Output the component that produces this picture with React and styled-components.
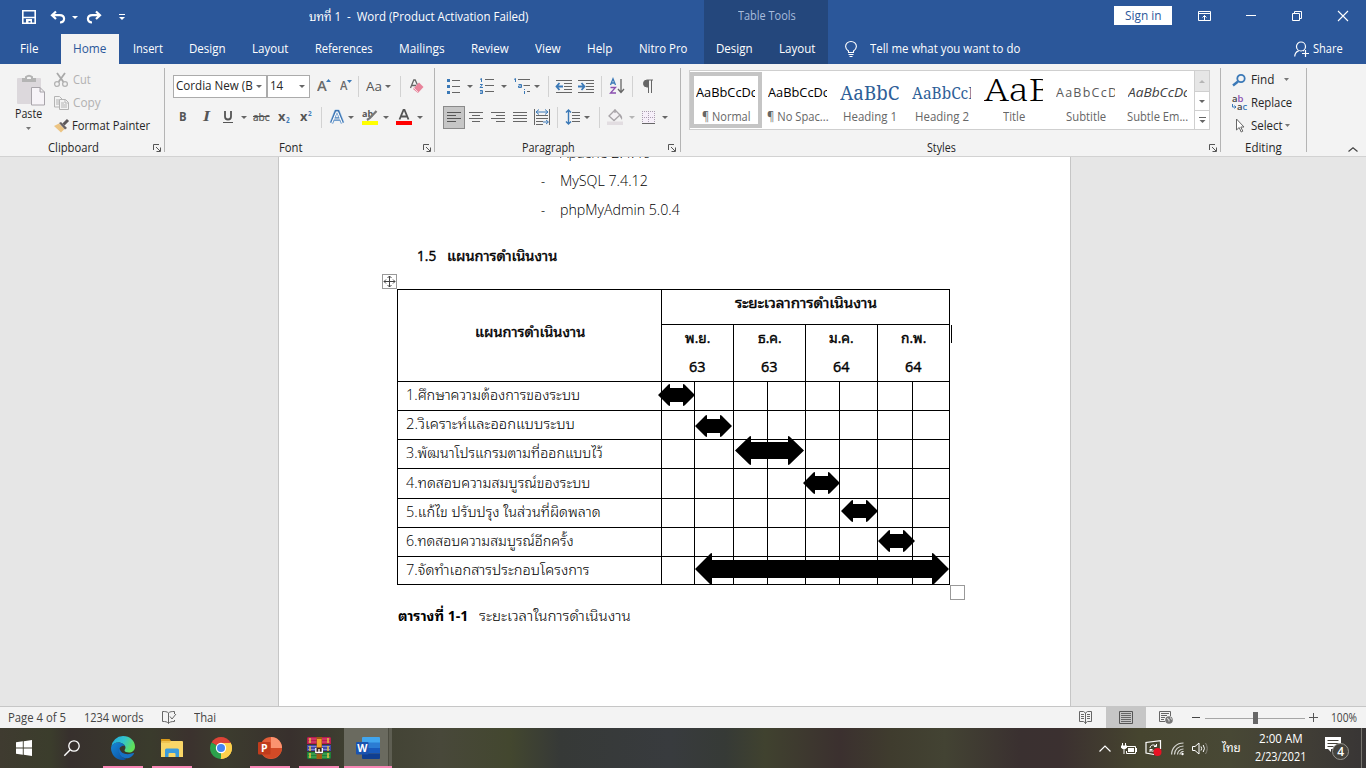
import React, { useLayoutEffect, useRef } from "react";
import styled, { createGlobalStyle, css } from "styled-components";

const THAI = `"Noto Looped Thai", "Noto Sans Thai Looped", "Loma", "Garuda", "Waree", "Kinnari", "Norasi", "TH Sarabun New", "Noto Sans Thai"`;
const UI = `"Open Sans", "Noto Sans", ${THAI}, sans-serif`;

const Global = createGlobalStyle`
  * { box-sizing: border-box; }
  body { margin: 0; overflow: hidden; background: #e6e6e6; font-family: ${UI}; font-size: 12px; color: #262626; }
  svg { display: block; flex: none; overflow: visible; }
`;

/* ---------- text of a known width ---------- */
const FitBox = styled.span`
  display: block;
  flex: none;
  width: ${(p) => p.$w}px;
  height: ${(p) => p.$lh || 18}px;
  line-height: ${(p) => p.$lh || 18}px;
  font-family: ${(p) => p.$font || UI};
  font-size: ${(p) => p.$size || 12}px;
  font-weight: ${(p) => p.$weight || 400};
  font-style: ${(p) => (p.$italic ? "italic" : "normal")};
  color: ${(p) => p.$color || "inherit"};
  -webkit-text-stroke: ${(p) => p.$stroke || 0}px currentColor;
  white-space: pre;
`;
const FitInner = styled.span`
  display: inline-block;
  transform-origin: 0 50%;
`;
function Fit({ w, children, ...rest }) {
  const ref = useRef(null);
  useLayoutEffect(() => {
    const el = ref.current;
    el.style.transform = "none";
    const natural = el.offsetWidth;
    if (natural) el.style.transform = `scaleX(${(w - 0.5) / natural})`;
  }, [w, children]);
  return (
    <FitBox $w={w} {...rest}>
      <FitInner ref={ref}>{children}</FitInner>
    </FitBox>
  );
}

const Svg = ({ w, h, children, ...r }) => (
  <svg width={w} height={h} viewBox={`0 0 ${w} ${h}`} fill="none" {...r}>
    {children}
  </svg>
);
const Caret = ({ c = "#666" }) => (
  <Svg w={6} h={3}>
    <path d="M0 0h6L3 3z" fill={c} />
  </Svg>
);

/* ---------- shell ---------- */
const Window = styled.div`
  width: 1366px;
  height: 768px;
  display: flex;
  flex-direction: column;
  overflow: hidden;
`;
const Header = styled.header`
  height: 64px;
  flex: none;
  display: flex;
  background: #2b579a;
  color: #fff;
`;
const HeaderPart = styled.div`
  width: ${(p) => p.$w}px;
  display: grid;
  grid-template-rows: 34px 30px;
  background: ${(p) => (p.$dark ? "#24477c" : "transparent")};
`;
const Bar = styled.div`
  display: flex;
  align-items: center;
  padding-left: ${(p) => p.$pl || 0}px;
  padding-bottom: ${(p) => p.$pb || 0}px;
`;
const Slot = styled.div`
  width: ${(p) => p.$w}px;
  flex: none;
  display: flex;
  align-items: center;
`;
const ActiveTab = styled.div`
  width: 58px;
  height: 30px;
  margin-right: 14px;
  padding-left: 12px;
  display: flex;
  align-items: center;
  background: #f3f3f3;
  color: #2b579a;
`;
const SignIn = styled.div`
  width: 58px;
  height: 19px;
  margin-right: 26px;
  padding-left: 11px;
  display: flex;
  align-items: center;
  background: #fff;
  color: #2b579a;
`;

const tabs = [
  ["Insert", 30, 56],
  ["Design", 37, 63],
  ["Layout", 37, 63],
  ["References", 58, 84],
  ["Mailings", 46, 72],
  ["Review", 38, 64],
  ["View", 26, 52],
  ["Help", 26, 52],
  ["Nitro Pro", 49, 60],
];

function TitleAndTabs() {
  return (
    <Header>
      <HeaderPart $w={704}>
        <Bar $pl={22}>
          <Slot $w={29}>
            <Svg w={14} h={14}>
              <path d="M.8.8h12.4v12.4H.8zM1 7.5h12" stroke="#fff" strokeWidth="1.6" />
              <path d="M4 9h6v5H8.500v-3H6.500v3H4z" fill="#fff" />
            </Svg>
          </Slot>
          <Slot $w={21}>
            <Svg w={15} h={13}>
              <path d="M5 .5L1 4.200l4 3.800M1.500 4.200h7.200c5.800 0 5.800 7.300.3 7.300" stroke="#fff" strokeWidth="2.200" />
            </Svg>
          </Slot>
          <Slot $w={14}><Caret c="#fff" /></Slot>
          <Slot $w={33}>
            <Svg w={15} h={13}>
              <path d="M10 .5l4 3.700-4 3.800M13.500 4.200H6.300c-5.800 0-5.800 7.300-.3 7.300" stroke="#fff" strokeWidth="2.200" />
            </Svg>
          </Slot>
          <Slot $w={190}>
            <Svg w={6} h={6}>
              <path d="M0 .5h6" stroke="#fff" />
              <path d="M0 3h6L3 6z" fill="#fff" />
            </Svg>
          </Slot>
          <Fit w={220} $lh={20}>{"บทที่ 1  -  Word (Product Activation Failed)"}</Fit>
        </Bar>
        <Bar $pl={20}>
          <Slot $w={41}><Fit w={19}>File</Fit></Slot>
          <ActiveTab><Fit w={34}>Home</Fit></ActiveTab>
          {tabs.map(([t, w, pitch]) => (
            <Slot key={t} $w={pitch}><Fit w={w}>{t}</Fit></Slot>
          ))}
        </Bar>
      </HeaderPart>
      <HeaderPart $w={124} $dark>
        <Bar $pl={34} $pb={2}><Fit w={58} $color="#a9bddd">Table Tools</Fit></Bar>
        <Bar $pl={12}>
          <Slot $w={63}><Fit w={37}>Design</Fit></Slot>
          <Slot $w={37}><Fit w={37}>Layout</Fit></Slot>
        </Bar>
      </HeaderPart>
      <HeaderPart $w={538}>
        <Bar $pl={286} $pb={3}>
          <SignIn><Fit w={37}>Sign in</Fit></SignIn>
          <Slot $w={48}>
            <Svg w={13} h={10}>
              <path d="M.5.5h12v9H.5zM.5 2.500h12M6.500 9V4.500M4.500 6.500l2-2 2 2" stroke="#fff" />
            </Svg>
          </Slot>
          <Slot $w={46}><Svg w={10} h={1}><path d="M0 .5h10" stroke="#fff" /></Svg></Slot>
          <Slot $w={46}>
            <Svg w={10} h={10}>
              <path d="M.5 2.500h7v7h-7zM2.500 2.500v-2h7v7h-2" stroke="#fff" />
            </Svg>
          </Slot>
          <Svg w={10} h={10}><path d="M0 0l10 10M10 0L0 10" stroke="#fff" strokeWidth="1.100" /></Svg>
        </Bar>
        <Bar $pl={17}>
          <Slot $w={25}>
            <Svg w={12} h={16}>
              <path d="M3.500 11.500V10C1.500 8.500.6 7.300.6 5.500a5.400 5 0 0 1 10.800 0c0 1.800-.9 3-2.900 4.500v1.500zM3.500 13.500h5M4.500 15.500h3" stroke="#fff" strokeWidth="1.100" />
            </Svg>
          </Slot>
          <Slot $w={424}><Fit w={151}>Tell me what you want to do</Fit></Slot>
          <Slot $w={19}>
            <Svg w={15} h={16}>
              <circle cx="7" cy="5.500" r="4.500" stroke="#fff" strokeWidth="1.200" />
              <path d="M.7 15.500c.2-3.200 1.500-5 4-5.700M9 9.300l1 .7M8 12.500h7M11.500 9v7" stroke="#fff" strokeWidth="1.200" />
            </Svg>
          </Slot>
          <Fit w={30}>Share</Fit>
        </Bar>
      </HeaderPart>
    </Header>
  );
}

/* ---------- ribbon ---------- */
const RibbonBar = styled.section`
  height: 93px;
  flex: none;
  display: flex;
  background: #f3f3f3;
  border-bottom: 1px solid #d2d2d2;
`;
const Divider = styled.i`
  flex: none;
  width: 1px;
  height: 84px;
  margin-top: 4px;
  background: #b4b4b4;
`;
const Group = styled.div`
  width: ${(p) => p.$w}px;
  flex: none;
  display: grid;
  grid-template-rows: 75px 17px;
`;
const Body = styled.div`
  display: flex;
  flex-direction: ${(p) => (p.$row ? "row" : "column")};
  gap: ${(p) => (p.$row ? 0 : 1)}px;
  padding: ${(p) => p.$pt ?? 7}px 0 0 ${(p) => p.$pl || 0}px;
`;
const Foot = styled.div`
  display: flex;
  align-items: center;
  justify-content: space-between;
  padding: 1px ${(p) => p.$pr || 0}px 0 ${(p) => p.$pl}px;
`;
const ToolRow = styled.div`
  height: ${(p) => p.$h || 30}px;
  flex: none;
  display: flex;
  align-items: center;
`;
const Sep = styled.i`
  width: 1px;
  height: 21px;
  flex: none;
  background: #d2d2d2;
  margin-right: ${(p) => p.$mr}px;
`;
const Combo = styled.div`
  width: ${(p) => p.$w}px;
  height: 23px;
  flex: none;
  display: flex;
  align-items: center;
  justify-content: space-between;
  padding: 0 ${(p) => p.$pr}px 0 ${(p) => p.$pl || 3}px;
  margin-right: ${(p) => p.$mr}px;
  background: #fff;
  border: 1px solid #ababab;
`;
const PasteButton = styled.div`
  width: 54px;
  padding: 4px 0 0 15px;
  display: flex;
  flex-direction: column;
`;
const PasteCaret = styled.div`
  padding: 4px 0 0 11px;
`;
const Column = styled.div`
  display: flex;
  flex-direction: column;
`;
const Pressed = styled.div`
  width: 22px;
  height: 23px;
  margin-right: 4px;
  padding-left: 3px;
  flex: none;
  display: flex;
  align-items: center;
  background: #c6c6c6;
  border: 1px solid #8a8a8a;
`;

const Launcher = () => (
  <Svg w={8} h={8}>
    <path d="M.5 6V.5H6M3 3l4 4M7.500 3.500v4h-4" stroke="#555" />
  </Svg>
);
const Lines = ({ d, w = 14, h = 11, c = "#666" }) => (
  <Svg w={w} h={h}><path d={d} stroke={c} /></Svg>
);

function ClipboardGroup() {
  return (
    <Group $w={164}>
      <Body $row $pt={4}>
        <PasteButton>
          <Svg w={30} h={33}>
            <rect x="2" y="6" width="24" height="26" rx="1" fill="#dcd8dc" />
            <path d="M7 6h14v4H7z" fill="#b4b4b4" />
            <path d="M11 7V5q3-2.500 6 0v2" fill="#f3f3f3" stroke="#b4b4b4" strokeWidth="2" />
            <path d="M16.500 15.500h8.500l4.500 4.500v13h-13zM25 15.500v4.500h4.500" fill="#f7f4f8" stroke="#a8a4aa" />
          </Svg>
          <Fit w={28} $lh={18}>Paste</Fit>
          <PasteCaret><Svg w={5} h={3}><path d="M0 0h5L2.500 3z" fill="#777" /></Svg></PasteCaret>
        </PasteButton>
        <Column>
          <ToolRow $h={23}>
            <Slot $w={19}>
              <Svg w={14} h={14}>
                <path d="M3 0l6.500 9M11 0L4.500 9" stroke="#a9a9a9" strokeWidth="1.800" />
                <circle cx="3" cy="11" r="2.400" stroke="#b4b4b4" strokeWidth="1.300" />
                <circle cx="11" cy="11" r="2.400" stroke="#b4b4b4" strokeWidth="1.300" />
              </Svg>
            </Slot>
            <Fit w={18} $color="#b1b1b1">Cut</Fit>
          </ToolRow>
          <ToolRow $h={23}>
            <Slot $w={19}>
              <Svg w={15} h={14}>
                <path d="M.5.5h5L8 3v8H.5zM2 4h3M2 6h3M2 8h3" stroke="#b4b4b4" />
                <path d="M5.500 3.500h6l3 3v7h-9zM11 3.500V7h3.500M7 7h3M7 9h6M7 11h6" fill="#f3f3f3" stroke="#b4b4b4" />
              </Svg>
            </Slot>
            <Fit w={28} $color="#b1b1b1">Copy</Fit>
          </ToolRow>
          <ToolRow $h={23}>
            <Slot $w={18}>
              <Svg w={16} h={14}>
                <path d="M0 7l5-2.500 5.500 5.500L7 13.500z" fill="#ecc483" />
                <path d="M5 4l2-1 6 6-2 1.500z" fill="#6a6466" />
                <path d="M9.500 5.500L14 1" stroke="#5c585a" strokeWidth="3" />
              </Svg>
            </Slot>
            <Fit w={79}>Format Painter</Fit>
          </ToolRow>
        </Column>
      </Body>
      <Foot $pl={48} $pr={3}><Fit w={51}>Clipboard</Fit><Launcher /></Foot>
    </Group>
  );
}

function FontGroup() {
  const g = "#555";
  return (
    <Group $w={269}>
      <Body $pl={8}>
        <ToolRow>
          <Combo $w={94} $pr={4} $pl={2} $mr={0}><Fit w={77}>Cordia New (B</Fit><Caret /></Combo>
          <Combo $w={43} $pr={4} $pl={2} $mr={7}><Fit w={14}>14</Fit><Caret /></Combo>
          <Slot $w={23}>
            <Fit w={10} $size={14} $lh={16} $weight={600} $color="#6a6a6a">A</Fit>
            <Svg w={5} h={14}><path d="M-1 3l2.500-3L4 3z" fill="#3b79b7" /></Svg>
          </Slot>
          <Slot $w={18}>
            <Fit w={8} $size={12} $lh={14} $weight={600} $color="#6a6a6a">A</Fit>
            <Svg w={5} h={12}><path d="M-1 0h5L1.500 3z" fill="#3b79b7" /></Svg>
          </Slot>
          <Sep $mr={7} />
          <Slot $w={19}><Fit w={16} $size={13} $lh={20} $color={g}>Aa</Fit></Slot>
          <Slot $w={15}><Caret /></Slot>
          <Sep $mr={9} />
          <Svg w={14} h={15}>
            <path d="M.5 9L3.800 1h1.400L7.500 6M2 6.500h4" stroke="#666" strokeWidth="1.300" />
            <path d="M9 3.500l4.500 4.500-5.500 6-5-4z" fill="#e8839a" />
            <path d="M3.500 8.500l5 5" stroke="#f6d3da" />
          </Svg>
        </ToolRow>
        <ToolRow>
          <Slot $w={6} />
          <Slot $w={24}><Fit w={8} $weight={700} $color={g}>B</Fit></Slot>
          <Slot $w={20}><Fit w={7} $font={`"Liberation Serif", serif`} $size={14} $italic $weight={700} $color={g}>I</Fit></Slot>
          <Slot $w={18}><Svg w={10} h={12}><path d="M2 0v5.500q0 3 3 3t3-3V0" stroke={g} strokeWidth="1.800" /><path d="M0 11.500h10" stroke={g} /></Svg></Slot>
          <Slot $w={12}><Caret /></Slot>
          <Slot $w={25}><Fit w={17} $size={11} $color={g} $stroke={0.2}><s>abc</s></Fit></Slot>
          <Slot $w={22}>
            <Fit w={8} $weight={700} $color={g}>x</Fit>
            <Fit w={4} $size={12} $weight={600} $color="#3b79b7">{"₂"}</Fit>
          </Slot>
          <Slot $w={21}>
            <Fit w={8} $weight={700} $color={g}>x</Fit>
            <Fit w={4} $size={12} $weight={600} $color="#3b79b7">{"²"}</Fit>
          </Slot>
          <Sep $mr={8} />
          <Slot $w={18}>
            <Svg w={14} h={14}>
              <path d="M1.500 13L6 1.500h2L12.500 13M3.500 9h7" stroke="#a6c8ea" strokeWidth="4" strokeLinejoin="round" />
              <path d="M1.500 13L6 1.500h2L12.500 13M3.500 9h7" stroke="#3d74b0" strokeWidth="2.800" />
              <path d="M1.800 13L6.400 2h1.200L12.200 13M3.500 9h7" stroke="#fff" strokeWidth="1.200" />
            </Svg>
          </Slot>
          <Slot $w={14}><Caret /></Slot>
          <Slot $w={21}>
            <Svg w={16} h={16}>
              <text x="0" y="8" fontFamily="Open Sans" fontSize="9" fontWeight="700" fill="#555">ab</text>
              <path d="M14.500 2L8 9l-3 2" stroke="#777" strokeWidth="2.200" />
              <path d="M0 12h16v4H0z" fill="#ff0" />
            </Svg>
          </Slot>
          <Slot $w={13}><Caret /></Slot>
          <Slot $w={21}>
            <Svg w={16} h={16}>
              <path d="M3.500 10.500L7.500 1h1l4 9.500M5 7.500h6" stroke="#555" strokeWidth="1.800" />
              <path d="M0 12h16v4H0z" fill="#f00" />
            </Svg>
          </Slot>
          <Caret />
        </ToolRow>
      </Body>
      <Foot $pl={114} $pr={3}><Fit w={24}>Font</Fit><Launcher /></Foot>
    </Group>
  );
}

const b = "#3b79b7";
function ParagraphGroup() {
  return (
    <Group $w={245}>
      <Body $pl={8}>
        <ToolRow>
          <Slot $w={4} />
          <Slot $w={20}>
            <Svg w={13} h={15}>
              <path d="M0 0h3v3H0zM0 6h3v3H0zM0 12h3v3H0z" fill={b} />
              <path d="M5 1.500h8M5 7.500h8M5 13.500h8" stroke="#666" />
            </Svg>
          </Slot>
          <Slot $w={13}><Caret /></Slot>
          <Slot $w={21}>
            <Svg w={15} h={16}>
              <path d="M0 1.500L1.500.5V4M0 6.500h2.500L0 9.500h3M0 12.500h2.500v3H0M0 14h2.500" stroke={b} />
              <path d="M5 1.500h9M5 7.500h9M5 13.500h9" stroke="#666" />
            </Svg>
          </Slot>
          <Slot $w={13}><Caret /></Slot>
          <Slot $w={20}>
            <Svg w={16} h={16}>
              <path d="M0 1.500L1.500.5V4M4.500 6.500h3v3h-3V8h3M10.500 11v1M10.500 13v3" stroke={b} />
              <path d="M4 1.500h12M9.500 7.500h6.500M13 13.500h3" stroke="#666" />
            </Svg>
          </Slot>
          <Slot $w={14}><Caret /></Slot>
          <Sep $mr={7} />
          <Slot $w={22}>
            <Svg w={16} h={13}>
              <path d="M0 .5h16M8 3.500h8M8 6.500h8M8 9.500h8M0 12.500h16" stroke="#666" />
              <path d="M0 6.500h7M3.500 3L.5 6.500l3 3.500" stroke={b} strokeWidth="1.800" />
            </Svg>
          </Slot>
          <Slot $w={23}>
            <Svg w={16} h={13}>
              <path d="M0 .5h16M8 3.500h8M8 6.500h8M8 9.500h8M0 12.500h16" stroke="#666" />
              <path d="M0 6.500h6M3.500 3l3 3.500-3 3.500" stroke={b} strokeWidth="1.800" />
            </Svg>
          </Slot>
          <Sep $mr={8} />
          <Slot $w={22}>
            <Svg w={14} h={16}>
              <path d="M.5 7L3 .8 5.500 7M1.300 5h3.500" stroke={b} strokeWidth="1.300" />
              <path d="M.5 9.500h5l-5 5.500h5.500" stroke="#8b4fb0" strokeWidth="1.300" />
              <path d="M11 1v13M8 11l3 3.500 3-3.500" stroke="#666" strokeWidth="1.300" />
            </Svg>
          </Slot>
          <Sep $mr={10} />
          <Svg w={10} h={13}>
            <path d="M5 7H4a3.500 3.500 0 0 1 0-7h6M5.500 0v13M8.500 0v13" stroke="#666" />
            <path d="M5 0H4a3.500 3.500 0 0 0 0 7h1z" fill="#666" />
          </Svg>
        </ToolRow>
        <ToolRow>
          <Pressed><Lines d="M0 .5h14M0 3.500h9M0 6.500h14M0 9.500h9" h={10} c="#555" /></Pressed>
          <Slot $w={22}><Lines d="M0 .5h14M3 3.500h8M0 6.500h14M3 9.500h8" h={10} /></Slot>
          <Slot $w={22}><Lines d="M0 .5h14M5 3.500h9M0 6.500h14M5 9.500h9" h={10} /></Slot>
          <Slot $w={21}><Lines d="M0 .5h14M0 3.500h14M0 6.500h14M0 9.500h14" h={10} /></Slot>
          <Slot $w={23}>
            <Svg w={16} h={16}>
              <path d="M.5 0v16M15.500 0v16M2 6.500h12M2 9.500h12M2 12.500h7M2 15.500h7" stroke="#666" />
              <path d="M2 3h12M5 .5L2 3l3 2.500M11 .5L14 3l-3 2.500M9 13h5M12 11l2.500 2-2.500 2" stroke={b} />
            </Svg>
          </Slot>
          <Sep $mr={8} />
          <Slot $w={18}>
            <Svg w={14} h={16}>
              <path d="M6 3.500h8M6 6.500h8M6 9.500h8M6 12.500h8" stroke="#666" />
              <path d="M2.500 1v14M0 3.500L2.500 1 5 3.500M0 12.500L2.500 15 5 12.500" stroke={b} strokeWidth="1.400" />
            </Svg>
          </Slot>
          <Slot $w={15}><Caret /></Slot>
          <Sep $mr={7} />
          <Slot $w={22}>
            <Svg w={16} h={16}>
              <path d="M2 7l6-6 5 5-6 5.500zM8 0v4" fill="#f3f0f3" stroke="#a8a4a8" strokeWidth="1.300" />
              <path d="M12 5q4 1 3 6l-2-3z" fill="#a8a4a8" />
              <path d="M0 12.500h16v3.500H0z" fill="#e2dde1" />
            </Svg>
          </Slot>
          <Slot $w={13}><Caret c="#b5b5b5" /></Slot>
          <Slot $w={20}>
            <Svg w={13} h={13}>
              <path d="M.5.5h12v12H.5z" fill="#f6eff9" />
              <path d="M.5 0v12M12.500 0v12M6.500 0v12M0 .5h13M0 6.500h13" stroke="#aa9eb0" strokeDasharray="1 1" />
              <path d="M0 12.500h13" stroke="#666" />
            </Svg>
          </Slot>
          <Caret />
        </ToolRow>
      </Body>
      <Foot $pl={87} $pr={4}><Fit w={53}>Paragraph</Fit><Launcher /></Foot>
    </Group>
  );
}

const Gallery = styled.div`
  width: 521px;
  height: 60px;
  display: flex;
  background: #fff;
  border: 1px solid #cfcfcf;
`;
const StyleCard = styled.div`
  width: 72px;
  height: 56px;
  margin-top: 1px;
  padding: ${(p) => (p.$on ? "0 2px" : "4px 6px")};
  border: ${(p) => (p.$on ? "4px solid #c5c5c5" : "0")};
  display: grid;
  grid-template-rows: 33px 16px;
  flex: none;
`;
const Preview = styled.div`
  width: 59px;
  overflow: hidden;
  display: flex;
  align-items: ${(p) => (p.$big ? "flex-start" : "center")};
`;
const CardName = styled.div`
  display: flex;
  justify-content: center;
  width: 60px;
`;
const ScrollCol = styled.div`
  margin-left: auto;
  width: 15px;
  display: grid;
  grid-template-rows: 21px 19px 18px;
  border-left: 1px solid #cfcfcf;
`;
const ScrollCell = styled.div`
  display: flex;
  align-items: center;
  justify-content: center;
  background: ${(p) => (p.$off ? "#e6e6e6" : "#fff")};
  border-bottom: ${(p) => (p.$last ? 0 : "1px solid #cfcfcf")};
`;
const SERIF = `"Noto Serif", "Liberation Serif", serif`;
const cards = [
  { t: "AaBbCcDc", w: 62, name: "¶ Normal", nw: 49, c: "#000", on: true },
  { t: "AaBbCcDc", w: 62, name: "¶ No Spac...", nw: 62, c: "#000" },
  { t: "AaBbC", w: 60, name: "Heading 1", nw: 54, c: "#2f5f98", size: 19, font: SERIF },
  { t: "AaBbCcD", w: 68, name: "Heading 2", nw: 54, c: "#2f5f98", size: 16, font: SERIF },
  { t: "AaB", w: 69, name: "Title", nw: 23, c: "#000", size: 31, font: SERIF },
  { t: "AaBbCcD", w: 62, name: "Subtitle", nw: 41, c: "#5a5a5a", size: 12, spaced: true },
  { t: "AaBbCcDc", w: 62, name: "Subtle Em...", nw: 62, c: "#404040", italic: true },
];

function StylesGroup() {
  return (
    <Group $w={539}>
      <Body $pl={8} $pt={6}>
        <Gallery>
          {cards.map((s) => (
            <StyleCard key={s.name} $on={s.on}>
              <Preview $big={s.size > 24}>
                <Fit w={s.w} $lh={s.size > 24 ? 26 : 22} $size={s.size || 12.5} $font={s.font} $color={s.c} $italic={s.italic} $weight={s.size > 24 ? 300 : 400}>
                  {s.spaced ? s.t.split("").join("\u200a") : s.t}
                </Fit>
              </Preview>
              <CardName><Fit w={s.nw} $lh={16} $color="#666">{s.name}</Fit></CardName>
            </StyleCard>
          ))}
          <ScrollCol>
            <ScrollCell $off><Svg w={6} h={3}><path d="M0 3h6L3 0z" fill="#b5b5b5" /></Svg></ScrollCell>
            <ScrollCell><Caret /></ScrollCell>
            <ScrollCell $last><Svg w={7} h={6}><path d="M0 .5h7" stroke="#666" /><path d="M.5 3h6l-3 3z" fill="#666" /></Svg></ScrollCell>
          </ScrollCol>
        </Gallery>
      </Body>
      <Foot $pl={246} $pr={3}><Fit w={29}>Styles</Fit><Launcher /></Foot>
    </Group>
  );
}

function EditingGroup() {
  return (
    <Group $w={85}>
      <Body $pt={4} $pl={11}>
        <Column>
          <ToolRow $h={23}>
            <Slot $w={19}>
              <Svg w={14} h={12}>
                <circle cx="9" cy="4.500" r="3.700" stroke={b} strokeWidth="1.800" />
                <path d="M6 7.500l-5 4" stroke={b} strokeWidth="2.400" />
              </Svg>
            </Slot>
            <Slot $w={33}><Fit w={24}>Find</Fit></Slot>
            <Svg w={5} h={3}><path d="M0 0h5L2.500 3z" fill="#777" /></Svg>
          </ToolRow>
          <ToolRow $h={23}>
            <Slot $w={19}>
              <Svg w={16} h={16}>
                <text x="0" y="7" fontFamily="Open Sans" fontSize="9.500" fontWeight="600" fill="#444">a<tspan fill="#8b4fb0">b</tspan></text>
                <text x="5" y="14.500" fontFamily="Open Sans" fontSize="9.500" fontWeight="600" fill="#444">a<tspan fill={b}>c</tspan></text>
                <path d="M.5 9v3h3M2.500 10.500L4 12l-1.500 1.500" stroke={b} />
              </Svg>
            </Slot>
            <Fit w={42}>Replace</Fit>
          </ToolRow>
          <ToolRow $h={23}>
            <Slot $w={19}>
              <Svg w={14} h={15}>
                <path d="M4.500 1v11l2.700-2.500 2 4.500 1.600-.8-2-4.200H12z" fill="#fff" stroke="#666" />
              </Svg>
            </Slot>
            <Slot $w={34}><Fit w={32}>Select</Fit></Slot>
            <Svg w={5} h={3}><path d="M0 0h5L2.500 3z" fill="#777" /></Svg>
          </ToolRow>
        </Column>
      </Body>
      <Foot $pl={24}><Fit w={37}>Editing</Fit></Foot>
    </Group>
  );
}
const Collapse = styled.div`
  flex: 1;
  display: flex;
  align-items: flex-end;
  justify-content: flex-end;
  padding: 0 8px 4px 0;
`;

function Ribbon() {
  return (
    <RibbonBar>
      <ClipboardGroup /><Divider />
      <FontGroup /><Divider />
      <ParagraphGroup /><Divider />
      <StylesGroup /><Divider />
      <EditingGroup /><Divider />
      <Collapse><Svg w={10} h={5}><path d="M.5 4.500L5 .7l4.500 3.800" stroke="#444" strokeWidth="1.200" /></Svg></Collapse>
    </RibbonBar>
  );
}

/* ---------- document ---------- */
const Workspace = styled.main`
  height: 549px;
  flex: none;
  overflow: hidden;
  background: #e6e6e6;
  padding-left: 278px;
`;
const Page = styled.article`
  width: 793px;
  height: 549px;
  overflow: hidden;
  background: #fff;
  border: solid #c6c6c6;
  border-width: 0 1px;
  color: #000;
  padding-left: 118px;
`;
const Bullets = styled.ul`
  list-style: none;
  margin: -20px 0 0 144px;
  padding: 0;
`;
const Bullet = styled.li`
  height: 29px;
  display: flex;
  align-items: center;
  gap: 14px;
  &:first-child { padding-top: 3px; }
`;
const Heading = styled.h2`
  margin: 18px 0 0 20px;
  height: 28px;
  display: flex;
  align-items: center;
  gap: 10px;
  font-size: 14px;
`;
const Plan = styled.div`
  position: relative;
  width: 553px;
  margin-top: 19px;
`;
const PlanGrid = styled.div`
  display: grid;
  grid-template-columns: 263px 32px 38px 33px 37px 33px 37px 34px 36px;
  grid-template-rows: 34px 56px 28px 28px 28px 29px 28px 28px 27px;
  gap: 1px;
  padding: 1px;
  background: #000;
`;
const Cell = styled.div`
  background: #fff;
  grid-column: ${(p) => p.$col || "auto"};
  grid-row: ${(p) => p.$row || "auto"};
  display: flex;
  flex-direction: column;
  align-items: ${(p) => (p.$left ? "flex-start" : "center")};
  justify-content: ${(p) => (p.$top ? "flex-start" : "center")};
  padding: ${(p) => p.$pad || 0};
`;
const DoubleArrow = styled.svg`
  position: absolute;
  left: ${(p) => p.$x}px;
  top: ${(p) => p.$y}px;
`;
const MoveHandle = styled.div`
  position: absolute;
  left: -15px;
  top: -15px;
  width: 15px;
  height: 15px;
  border: 1px solid #999;
  background: #fff;
  display: grid;
  place-items: center;
`;
const SizeHandle = styled.div`
  position: absolute;
  right: -15px;
  bottom: -15px;
  width: 15px;
  height: 15px;
  border: 1px solid #999;
  background: #fff;
`;
const TextCursor = styled.i`
  position: absolute;
  left: 554px;
  top: 36px;
  width: 1px;
  height: 18px;
  background: #000;
`;
const Caption = styled.p`
  margin: 17px 0 0 1px;
  height: 28px;
  display: flex;
  align-items: center;
  gap: 10px;
`;

const DT = ({ bold, ...r }) => (
  <Fit $size={14} $lh={28} $weight={bold ? 400 : 300} $stroke={bold ? 0.4 : 0} {...r} />
);

const months = [["พ.ย.", 26, "63"], ["ธ.ค.", 24, "63"], ["ม.ค.", 25, "64"], ["ก.พ.", 26, "64"]];
const steps = [
  ["1.ศึกษาความต้องการของระบบ", 175],
  ["2.วิเคราะห์และออกแบบระบบ", 169],
  ["3.พัฒนาโปรแกรมตามที่ออกแบบไว้", 197],
  ["4.ทดสอบความสมบูรณ์ของระบบ", 185],
  ["5.แก้ไข ปรับปรุง ในส่วนที่ผิดพลาด", 195],
  ["6.ทดสอบความสมบูรณ์อีกครั้ง", 168],
  ["7.จัดทำเอกสารประกอบโครงการ", 184],
];
const arrows = [
  [261, 95, 37, 22, 12, 4],
  [298, 126, 37, 22, 12, 4],
  [338, 147, 69, 29, 16, 6],
  [406, 183, 37, 22, 12, 4],
  [444, 211, 37, 22, 12, 4],
  [481, 241, 37, 22, 12, 4],
  [298, 264, 254, 32, 17, 7],
];
const arrowPath = (w, h, hd, i) =>
  `M0 ${h / 2}L${hd - 2} 1Q${hd} -1 ${hd} 1V${i}H${w - hd}V1Q${w - hd} -1 ${w - hd + 2} 1L${w} ${h / 2}L${w - hd + 2} ${h - 1}Q${w - hd} ${h + 1} ${w - hd} ${h - 1}V${h - i}H${hd}V${h - 1}Q${hd} ${h + 1} ${hd - 2} ${h - 1}Z`;

function Document() {
  return (
    <Workspace>
      <Page>
        <Bullets>
          {[["Apache 2.4.46", 91], ["MySQL 7.4.12", 88], ["phpMyAdmin 5.0.4", 120]].map(([t, w]) => (
            <Bullet key={t}><DT w={5}>-</DT><DT w={w}>{t}</DT></Bullet>
          ))}
        </Bullets>
        <Heading><DT bold w={20}>1.5</DT><DT bold w={111}>แผนการดำเนินงาน</DT></Heading>
        <Plan>
          <PlanGrid>
            <Cell $row="1 / 3" $col="1" $pad="0 0 8px 2px"><DT bold w={111}>แผนการดำเนินงาน</DT></Cell>
            <Cell $col="2 / 10" $pad="0 0 8px 1px"><DT bold w={143}>ระยะเวลาการดำเนินงาน</DT></Cell>
            {months.map(([m, w, y], i) => (
              <Cell key={m} $col={`${2 + i * 2} / span 2`} $top>
                <DT bold w={w} $lh={26}>{m}</DT>
                <DT bold w={17} $lh={31}>{y}</DT>
              </Cell>
            ))}
            {steps.map(([s, w]) => (
              <React.Fragment key={s}>
                <Cell $col="1" $left $pad="0 0 2px 8px"><DT w={w} $lh={26}>{s}</DT></Cell>
                {[0, 1, 2, 3, 4, 5, 6, 7].map((n) => <Cell key={n} />)}
              </React.Fragment>
            ))}
          </PlanGrid>
          {arrows.map(([x, y, w, h, hd, i]) => (
            <DoubleArrow key={y} $x={x} $y={y} width={w} height={h} viewBox={`0 0 ${w} ${h}`}>
              <path d={arrowPath(w, h, hd, i)} fill="#000" />
            </DoubleArrow>
          ))}
          <MoveHandle>
            <Svg w={11} h={11}>
              <path d="M5.500 0v11M0 5.500h11M3.500 2l2-2 2 2M3.500 9l2 2 2-2M2 3.500l-2 2 2 2M9 3.500l2 2-2 2" stroke="#444" />
            </Svg>
          </MoveHandle>
          <SizeHandle />
          <TextCursor />
        </Plan>
        <Caption><DT w={71} $weight={700}>ตารางที่ 1-1</DT><DT w={152}>ระยะเวลาในการดำเนินงาน</DT></Caption>
      </Page>
    </Workspace>
  );
}

/* ---------- status bar ---------- */
const StatusBar = styled.footer`
  height: 22px;
  flex: none;
  display: flex;
  align-items: center;
  padding-left: 8px;
  background: #f3f3f3;
  border-top: 1px solid #c6c6c6;
  color: #444;
`;
const ViewButton = styled.div`
  width: 40px;
  height: 21px;
  flex: none;
  display: grid;
  place-items: center;
  background: ${(p) => (p.$on ? "#c6c6c6" : "transparent")};
`;
const Track = styled.div`
  width: 100px;
  height: 12px;
  flex: none;
  margin: 0 4px 0 5px;
  display: flex;
  justify-content: center;
  background: linear-gradient(#a6a6a6, #a6a6a6) 0 6px / 100% 1px no-repeat;
`;
const Thumb = styled.i`
  width: 5px;
  height: 12px;
  background: #666;
`;

function Status() {
  return (
    <StatusBar>
      <Slot $w={76}><Fit w={58}>Page 4 of 5</Fit></Slot>
      <Slot $w={78}><Fit w={60}>1234 words</Fit></Slot>
      <Slot $w={32}>
        <Svg w={14} h={13}>
          <path d="M6.500 2C5 .5 3 .5.5.5v10c3 0 4.500 0 6 2zM6.500 2C8 .5 10 .5 12.500.5V3M6.500 12.500c1-1.500 2.500-2 6-2V9M8 5.500l2 2.500 4-5" stroke="#666" />
        </Svg>
      </Slot>
      <Slot $w={872}><Fit w={23}>Thai</Fit></Slot>
      <ViewButton>
        <Svg w={14} h={13}>
          <path d="M6.500 2L4.500.5h-4v10h4l2 1.500 2-1.500h4V.5h-4zM6.500 2v11M2 3.500h3M2 5.500h3M2 7.500h3M8 3.500h3M8 5.500h3M8 7.500h3" stroke="#666" />
        </Svg>
      </ViewButton>
      <ViewButton $on>
        <Svg w={14} h={13}><path d="M.5.5h13v12H.5z" stroke="#555" /><path d="M2 2.500h10M2 4.500h10M2 6.500h10M2 8.500h10M2 10.500h10" stroke="#666" /></Svg>
      </ViewButton>
      <ViewButton>
        <Svg w={14} h={13}>
          <path d="M6 10.500H.5V.5h11V5M2 2.500h8M2 4.500h6M2 6.500h4M2 8.500h3" stroke="#666" />
          <circle cx="10" cy="9" r="3.800" fill="#777" />
          <path d="M8 7.500l2 1v2M11.500 6.500l1 2" stroke="#eee" />
        </Svg>
      </ViewButton>
      <Slot $w={6} />
      <Svg w={8} h={1}><path d="M0 .5h8" stroke="#444" /></Svg>
      <Track><Thumb /></Track>
      <Slot $w={22}><Svg w={9} h={9}><path d="M0 4.500h9M4.500 0v9" stroke="#555" /></Svg></Slot>
      <Fit w={27}>100%</Fit>
    </StatusBar>
  );
}

/* ---------- taskbar ---------- */
const TaskBar = styled.footer`
  height: 40px;
  flex: none;
  display: flex;
  color: #fff;
  background: linear-gradient(90deg, #3f3b30 0, #3b3d2c 50px, #37302d 70px, #3a3b2c 150px, #3b322e 190px, #3c3c2e 225px, #38302d 290px, #3f4031 350px, #48483a 440px, #43472f 510px, #363937 560px, #383b3e 670px, #363a36 725px, #40422f 765px, #3b302f 840px, #3f3c2e 890px, #434333 945px, #3a3030 1020px, #3b3030 1060px, #46452f 1140px, #484835 1230px, #434036 1290px, #383535 1366px);
`;
const TaskButton = styled.div`
  width: ${(p) => p.$w || 40}px;
  height: 40px;
  margin-right: ${(p) => p.$mr || 0}px;
  flex: none;
  display: grid;
  place-items: center;
  ${(p) => p.$run && css`box-shadow: inset 0 -2px #f886b5;`}
  ${(p) => p.$on && css`background: linear-gradient(90deg, #6a6a5f 0 44px, #4b4b40 44px 45px, #5e5e52 45px);`}
`;
const Tray = styled.div`
  margin-left: auto;
  width: 267px;
  display: flex;
  align-items: center;
`;
const Clock = styled.div`
  width: 70px;
  display: flex;
  flex-direction: column;
  align-items: center;
  padding-right: 19px;
`;
const ShowDesktop = styled.i`
  width: 1px;
  height: 40px;
  margin-left: 12px;
  background: #77756f;
`;

function Taskbar() {
  return (
    <TaskBar>
      <TaskButton $w={48}>
        <Svg w={16} h={16}><path d="M0 2.300l6.800-1v6.300H0zM7.700 1.200L16 0v7.600H7.700zM0 8.400h6.800v6.300L0 13.700zM7.700 8.400H16V16l-8.300-1.200z" fill="#fff" /></Svg>
      </TaskButton>
      <TaskButton $w={48} $mr={7}>
        <Svg w={16} h={16}><circle cx="10" cy="6" r="5.200" stroke="#fff" strokeWidth="1.300" /><path d="M6.200 9.800L.3 15.700" stroke="#fff" strokeWidth="1.400" /></Svg>
      </TaskButton>
      <TaskButton $run $mr={9}>
        <Svg w={24} h={24}>
          <defs>
            <linearGradient id="e1" x1="0" y1="0" x2="1" y2=".4"><stop stopColor="#1da9e0" /><stop offset=".55" stopColor="#33c3ce" /><stop offset="1" stopColor="#5fe05a" /></linearGradient>
            <linearGradient id="e2" x1="0" y1="0" x2="1" y2="1"><stop stopColor="#1687d8" /><stop offset="1" stopColor="#0c4f9e" /></linearGradient>
          </defs>
          <path d="M.3 11A12 12 0 0 1 12 0c7 0 12 5 12 10.500 0 4-3 6-6 6-2.500 0-4.500-.8-4.500-2 0-.8 1-1.200 1-3C14.500 9 11 6.500 7.500 6.500 4 6.500 1.500 8 .3 11z" fill="url(#e1)" />
          <path d="M0 12C.5 8.500 4 6.500 7.500 6.500c3 0 5.500 1.500 6.500 3.500-2-1-6 .5-6 5 0 4 3.500 7.500 7.500 7.500-1 1-2.500 1.500-4 1.500C5 24 0 18.500 0 12z" fill="url(#e2)" />
          <path d="M8.500 12c-2.500 6 2.500 11.500 9.500 10 2-.8 4-2.500 5-4.500.2-.6-.2-.7-.8-.4C16 19.500 9.500 18 8.500 12z" fill="#1670c4" />
        </Svg>
      </TaskButton>
      <TaskButton $run $mr={9}>
        <Svg w={22} h={18}>
          <path d="M0 0h8.500l1.500 2H0z" fill="#d99a1b" />
          <path d="M0 3q0-1 1-1h20q1 0 1 1v15H0z" fill="#f9d667" />
          <path d="M0 2.500h10l-1.500 1H0z" fill="#e8b03a" />
          <path d="M4 11q0-1.500 1.500-1.500h11Q18 9.500 18 11v7h-3.500v-3q0-1-1-1h-5q-1 0-1 1v3H4z" fill="#3b9bdc" />
        </Svg>
      </TaskButton>
      <TaskButton $mr={9}>
        <Svg w={22} h={22}>
          <path d="M11 11L1.500 5.500A11 11 0 0 1 20.500 5.500z" fill="#dc4437" />
          <path d="M11 11l9.500-5.500A11 11 0 0 1 11 22z" fill="#fdd04c" />
          <path d="M11 11v11A11 11 0 0 1 1.500 5.500z" fill="#2ba24c" />
          <path d="M11 6h9.800a11 11 0 0 0-.6-1L11 5z" fill="#dc4437" />
          <path d="M15.300 13.500L10.500 22h.5A11 11 0 0 0 20.800 6H11z" fill="#fdd04c" />
          <circle cx="11" cy="11" r="5.200" fill="#fff" />
          <circle cx="11" cy="11" r="4" fill="#4485f4" />
        </Svg>
      </TaskButton>
      <TaskButton $run $mr={9}>
        <Svg w={24} h={22}>
          <circle cx="13" cy="11" r="11" fill="#e25d38" />
          <path d="M13 0a11 11 0 0 1 11 11H13z" fill="#fb9370" />
          <path d="M4 11h20a11 11 0 0 1-19 7z" fill="#d34a26" />
          <rect y="5" width="12.500" height="12.500" rx="1" fill="#c13c1c" />
          <text x="3" y="15" fontFamily="Open Sans" fontSize="10.500" fontWeight="700" fill="#fff">P</text>
        </Svg>
      </TaskButton>
      <TaskButton $run $mr={5}>
        <Svg w={24} h={22}>
          <path d="M1 0h22l1 1v6H0V1z" fill="#b81d4e" /><path d="M1 2h22M1 5h22" stroke="#e3507b" />
          <path d="M0 8h24v6H0z" fill="#4248a8" /><path d="M1 9.500h22M1 12.500h22" stroke="#7f86d6" />
          <path d="M0 15h24v6l-1 1H1l-1-1z" fill="#1e8038" /><path d="M1 17h22M1 20h22" stroke="#4fb760" />
          <path d="M3 1v5M3 9v5M3 16v5M21 1v5M21 9v5M21 16v5" stroke="#e6c13f" strokeWidth="1.500" />
          <path d="M9.500 0h5.500v22H9.500z" fill="#a35a14" />
          <path d="M10 2h4.500v8H10z" fill="#f2a52a" />
          <path d="M8 11h8v6H8z" fill="#3a2318" />
          <path d="M8.800 11v4.500h6.500V11M12 12v3" stroke="#fff" strokeWidth="1.300" />
        </Svg>
      </TaskButton>
      <TaskButton $w={48} $run $on>
        <Svg w={24} h={22}>
          <path d="M6 1q0-1 1-1h16q1 0 1 1v5H6z" fill="#41a5ee" />
          <path d="M6 5.500h18V11H6z" fill="#2b7cd3" />
          <path d="M6 11h18v5.500H6z" fill="#185abd" />
          <path d="M6 16.500h18V21q0 1-1 1H7q-1 0-1-1z" fill="#103f91" />
          <rect y="5" width="12.500" height="12.500" rx="1" fill="#1a53b0" />
          <text x="1.200" y="15" fontFamily="Open Sans" fontSize="10.500" fontWeight="700" fill="#fff">W</text>
        </Svg>
      </TaskButton>
      <Tray>
        <Slot $w={22}><Svg w={12} h={7}><path d="M.5 6.500L6 1l5.500 5.500" stroke="#fff" strokeWidth="1.200" /></Svg></Slot>
        <Slot $w={24}>
          <Svg w={16} h={11}>
            <path d="M5 3.500h9.500v7h-9V8" stroke="#fff" /><path d="M7 5h6v4H7zM15 5h1v4h-1z" fill="#fff" />
            <path d="M1.500 0v3M4.500 0v3M3 6v5" stroke="#fff" /><path d="M0 2.500h6v2L4.500 6h-3L0 4.500z" fill="#fff" />
          </Svg>
        </Slot>
        <Slot $w={26}>
          <Svg w={17} h={16}>
            <path d="M9 14.500l-8-1.500V2.500L15.500.7V9" stroke="#fff" strokeWidth="1.200" />
            <path d="M11 6C8 4 5.500 5 5 8M9 6.500h2.500V4M5 9.500c1 2 3 2 4.500 1M7.500 9.500H5V12" stroke="#fff" />
            <circle cx="12.500" cy="12" r="4" fill="#e81224" />
          </Svg>
        </Slot>
        <Slot $w={21}>
          <Svg w={13} h={13}>
            <path d="M.6 12.500C.6 6 5.500 1 12.500 1M3.500 12.500c0-5 4-8.500 9-8.500M6.500 12.500c0-3 2.500-5.500 6-5.500" stroke="#d8d8d4" strokeWidth="1.200" />
            <path d="M9 12.500c0-2 1.500-3 3.500-3" stroke="#fff" /><circle cx="11.500" cy="12" r="1.200" fill="#fff" />
          </Svg>
        </Slot>
        <Slot $w={30}>
          <Svg w={16} h={13}>
            <path d="M.5 4.500h2.500l4-3.500v11L3 8.500H.5zM9 4.500q1.300 2 0 4M11.200 3q2.500 3.500 0 7" stroke="#fff" />
            <path d="M13.500 1q3.500 5.500 0 11" stroke="#88867e" />
          </Svg>
        </Slot>
        <Slot $w={33}><Fit w={19} $lh={20}>ไทย</Fit></Slot>
        <Clock><Fit w={44} $lh={18}>2:00 AM</Fit><Fit w={52} $lh={18}>2/23/2021</Fit></Clock>
        <Svg w={24} h={24}>
          <path d="M0 1h16v12H6v3l-3-3H0z" fill="#fff" />
          <path d="M2.500 4.500h11M2.500 7.500h11M2.500 10.500h6" stroke="#45423a" />
          <circle cx="15.500" cy="15.500" r="8" fill="#45433d" stroke="#96948e" />
          <text x="12.200" y="20" fontFamily="Open Sans" fontSize="12" fontWeight="600" fill="#fff">4</text>
        </Svg>
        <ShowDesktop />
      </Tray>
    </TaskBar>
  );
}

export default function App() {
  return (
    <Window>
      <Global />
      <TitleAndTabs />
      <Ribbon />
      <Document />
      <Status />
      <Taskbar />
    </Window>
  );
}
